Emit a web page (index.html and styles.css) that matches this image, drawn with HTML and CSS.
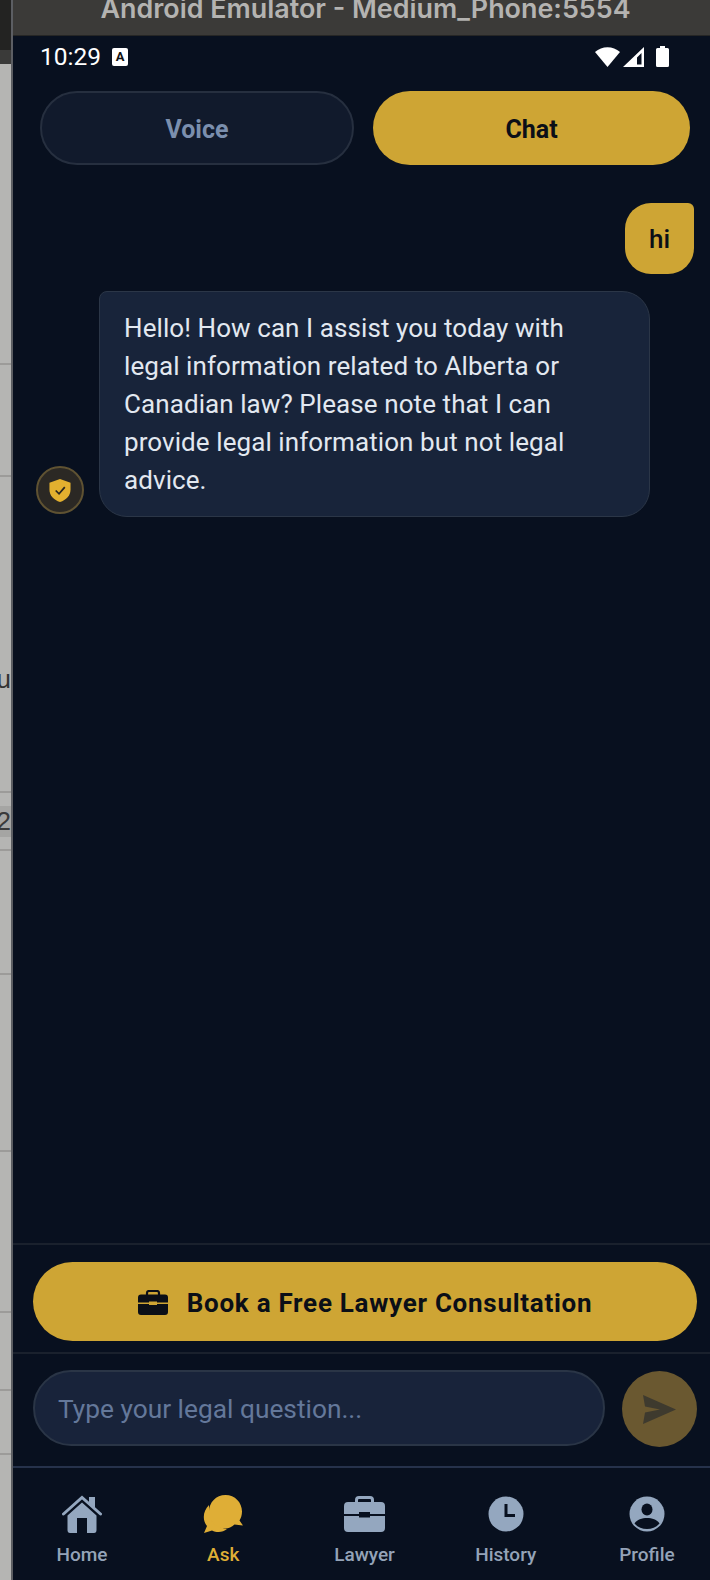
FILE: index.html
```html
<!doctype html>
<html lang="en">
<head>
	<meta charset="utf-8">
	<meta name="viewport" content="width=device-width, initial-scale=1.0">
	<title>Android Emulator - Medium_Phone:5554</title>
	<link rel="stylesheet" href="styles.css">
</head>

<body>
	<div id="desk">
		<div class="desk_top"></div>
		<div class="desk_tab"></div>
		<div class="desk_row row_a"></div>
		<div class="desk_row row_b"></div>
		<div class="desk_row row_c">u</div>
		<div class="desk_row row_d">2</div>
		<div class="desk_row row_e"></div>
		<div class="desk_row row_f"></div>
		<div class="desk_row row_g"></div>
		<div class="desk_row row_h"></div>
		<div class="desk_row row_i"></div>
	</div>

	<div id="window">
		<div id="titlebar">Android Emulator - Medium_Phone:5554</div>

		<div id="phone">
			<div id="status">
				<span class="clock">10:29</span>
				<span class="keyboard_badge">A</span>
				<span class="status_right">
					<svg width="25" height="20" viewBox="0 0 25 20"><path d="M0 5 C7 -1.500 18 -1.500 25 5 L12.500 20 Z" fill="#fff"/></svg>
					<svg width="21" height="20" viewBox="0 0 21 20"><path d="M21 0 V20 H0 Z M18.500 6 L14 10.500 V17.500 H18.500 Z" fill="#fff" fill-rule="evenodd"/></svg>
					<svg class="battery" width="13" height="21" viewBox="0 0 13 21"><path d="M4 0 H9 V2 H11.500 Q13 2 13 3.500 V19.500 Q13 21 11.500 21 H1.500 Q0 21 0 19.500 V3.500 Q0 2 1.500 2 H4 Z" fill="#fff"/></svg>
				</span>
			</div>

			<div id="modes">
				<div class="mode mode_voice">Voice</div>
				<div class="mode mode_chat">Chat</div>
			</div>

			<div id="messages">
				<div class="bubble_user">hi</div>
				<div class="bot_row">
					<div class="avatar">
						<svg width="22" height="23" viewBox="0 0 22 24"><path d="M11 0 L22 4 V11 C22 17.500 17.500 22 11 24 C4.500 22 0 17.500 0 11 V4 Z" fill="#e3b02f"/><path d="M6.500 12 L10 15.500 L16 8.500" fill="none" stroke="#2a2620" stroke-width="1.800"/></svg>
					</div>
					<div class="bubble_bot">Hello! How can I assist you today with legal information related to Alberta or Canadian law? Please note that I can provide legal information but not legal advice.</div>
				</div>
			</div>

			<div id="cta_wrap">
				<div class="cta">
					<svg width="30" height="25" viewBox="0 0 30 25"><path d="M9 5 V3 Q9 1 11 1 H19 Q21 1 21 3 V5" fill="none" stroke="#0b0f17" stroke-width="2.200"/><path d="M3 4.500 H27 Q30 4.500 30 7.500 V12.500 H19 V11.500 H11 V12.500 H0 V7.500 Q0 4.500 3 4.500 Z M0 14 H11 V15 H19 V14 H30 V22 Q30 25 27 25 H3 Q0 25 0 22 Z" fill="#0b0f17"/></svg>
					<span>Book a Free Lawyer Consultation</span>
				</div>
			</div>

			<div id="input_wrap">
				<input class="question" type="text" placeholder="Type your legal question...">
				<div class="send">
					<svg width="33" height="29" viewBox="0 0 33 29"><path d="M0 0 L33 14.500 L0 29 L2 17.500 L17 14.500 L2 11.500 Z" fill="#3e3a2e"/></svg>
				</div>
			</div>

			<div id="tabs">
				<div class="tab">
					<svg width="40" height="38" viewBox="0 0 40 38"><path d="M1.500 19 L20 2.500 L38.500 19" fill="none" stroke="#94a7bf" stroke-width="3" stroke-linecap="round"/><path d="M27 2 H33 V13 L27 8 Z" fill="#94a7bf"/><path d="M20 7.500 L34.500 20.500 V35 Q34.500 38 32 38 H25 V23 H15 V38 H8 Q5.500 38 5.500 35 V20.500 Z" fill="#94a7bf"/></svg>
					<span>Home</span>
				</div>
				<div class="tab tab_active">
					<svg width="40" height="38" viewBox="0 0 40 38"><path d="M6 10 C0 16 -1 25 4 31 L1 38 L9 35.500 C14 38 20 37.500 24 34 C14 33 6 23 6 10 Z" fill="#dfae36"/><path d="M22.500 0 C32 0 39 7.500 39 16.500 C39 20 38 23 36.500 25.500 L40 30.500 L31.500 29.500 C28.500 32 25.500 33.500 22.500 33.500 C13 33.500 6 26 6 16.500 C6 7.500 13 0 22.500 0 Z" fill="#dfae36"/></svg>
					<span>Ask</span>
				</div>
				<div class="tab">
					<svg width="41" height="36" viewBox="0 0 41 36"><path d="M12.500 7 V4 Q12.500 1.500 15 1.500 H26 Q28.500 1.500 28.500 4 V7" fill="none" stroke="#94a7bf" stroke-width="3"/><path d="M4 6 H37 Q41 6 41 10 V18 H26 V16 H15 V18 H0 V10 Q0 6 4 6 Z M0 20 H15 V21.500 H26 V20 H41 V32 Q41 36 37 36 H4 Q0 36 0 32 Z" fill="#94a7bf"/></svg>
					<span>Lawyer</span>
				</div>
				<div class="tab">
					<svg width="36" height="36" viewBox="0 0 36 36"><circle cx="18" cy="18" r="17.500" fill="#94a7bf"/><path d="M18 8 V19.500 H27" fill="none" stroke="#08101f" stroke-width="3"/></svg>
					<span>History</span>
				</div>
				<div class="tab">
					<svg width="36" height="36" viewBox="0 0 36 36"><circle cx="18" cy="18" r="17.500" fill="#94a7bf"/><ellipse cx="18" cy="13.500" rx="5.500" ry="6" fill="#08101f"/><path d="M5.500 27.500 C8 23.500 13 22 18 22 C23 22 28 23.500 30.500 27.500 C27.500 31 23 33 18 33 C13 33 8.500 31 5.500 27.500 Z" fill="#08101f"/></svg>
					<span>Profile</span>
				</div>
			</div>
		</div>
	</div>
</body>
</html>
```

FILE: styles.css
```css
html, body {
	margin: 0;
	height: 100%;
}
body {
	display: flex;
	height: 1580px;
	overflow: hidden;
	background: #08101f;
	font-family: Roboto, "Liberation Sans", sans-serif;
}

/* Desktop showing behind the emulator window */
#desk {
	width: 11px;
	flex: none;
	display: flex;
	flex-direction: column;
	background: #b5b5b3;
	border-right: 2px solid #5c5e63;
	overflow: hidden;
	color: #333;
	font: 26px/1 "Liberation Sans", sans-serif;
}
.desk_top {
	height: 50px;
	background: #232322;
}
.desk_tab {
	height: 14px;
	background: #3a3a39;
}
.desk_row {
	flex: none;
	box-sizing: border-box;
	border-bottom: 2px solid #9c9b99;
	display: flex;
	justify-content: flex-end;
	align-items: center;
}
.row_a { height: 301px; }
.row_b { height: 112px; }
.row_c { height: 316px; padding-top: 90px; }
.row_d { height: 58px; background: linear-gradient(#b5b5b3 24%, #a5a5a3 24%, #a5a5a3 78%, #b5b5b3 78%); color: #3a3a3a; }
.row_e { height: 124px; }
.row_f { height: 177px; }
.row_g { height: 161px; }
.row_h { height: 78px; }
.row_i { height: 64px; }

#window {
	flex: 1;
	min-width: 0;
	display: flex;
	flex-direction: column;
}
#titlebar {
	height: 36px;
	flex: none;
	box-sizing: border-box;
	border-bottom: 1px solid #262625;
	background: #3b3a38;
	color: #b4b3b1;
	font: 600 26.900px/17px Inter, Roboto, sans-serif;
	text-align: center;
	white-space: nowrap;
	overflow: hidden;
	padding-left: 8px;
}
#phone {
	flex: 1;
	min-height: 0;
	display: flex;
	flex-direction: column;
}

/* Status bar */
#status {
	height: 55px;
	flex: none;
	box-sizing: border-box;
	padding: 0 41px 14px 27px;
	display: flex;
	align-items: center;
	color: #fff;
}
.clock {
	font-size: 24.500px;
}
.keyboard_badge {
	width: 16px;
	height: 18px;
	margin-left: 11px;
	background: #fff;
	border-radius: 2px;
	color: #111;
	font-size: 13px;
	font-weight: 700;
	line-height: 17px;
	text-align: center;
}
.status_right {
	margin-left: auto;
	display: flex;
	align-items: center;
	gap: 3px;
}
.battery {
	margin-left: 9px;
}

/* Voice / Chat switch */
#modes {
	flex: none;
	display: flex;
	gap: 19px;
	padding: 0 20px 0 27px;
}
.mode {
	height: 74px;
	box-sizing: border-box;
	padding-top: 2px;
	border-radius: 37px;
	display: flex;
	align-items: center;
	justify-content: center;
	font-size: 25px;
	font-weight: 700;
}
.mode_voice {
	width: 314px;
	background: #111a2c;
	border: 2px solid #262f3f;
	color: #7b8fae;
}
.mode_chat {
	width: 317px;
	background: #cea534;
	color: #0b0f17;
}

/* Conversation */
#messages {
	flex: 1;
	min-height: 0;
	display: flex;
	flex-direction: column;
	padding: 38px 16px 0 23px;
}
.bubble_user {
	align-self: flex-end;
	width: 69px;
	height: 71px;
	border-radius: 26px 6px 26px 26px;
	background: #cea534;
	color: #0b0f17;
	font-size: 26px;
	font-weight: 500;
	line-height: 73px;
	text-align: center;
}
.bot_row {
	margin-top: 17px;
	display: flex;
	align-items: flex-end;
	gap: 15px;
}
.avatar {
	width: 48px;
	height: 48px;
	flex: none;
	box-sizing: border-box;
	margin-bottom: 3px;
	border: 2px solid #5f5232;
	border-radius: 50%;
	background: #2b2824;
	display: flex;
	align-items: center;
	justify-content: center;
}
.bubble_bot {
	width: 551px;
	box-sizing: border-box;
	padding: 17px 24px;
	border: 1px solid #2b3647;
	border-radius: 8px 28px 28px 28px;
	background: #18243a;
	color: #e2e8f0;
	font-size: 26px;
	letter-spacing: 0.08px;
	line-height: 38px;
}

/* Book a lawyer */
#cta_wrap {
	flex: none;
	padding: 17px 13px 11px 20px;
	border-top: 2px solid #1a212d;
	border-bottom: 2px solid #1a212d;
}
.cta {
	height: 79px;
	box-sizing: border-box;
	padding-top: 2px;
	border-radius: 40px;
	background: #cea534;
	color: #0b0f17;
	display: flex;
	align-items: center;
	justify-content: center;
	gap: 19px;
	font-size: 26px;
	font-weight: 700;
	letter-spacing: 0.72px;
}

/* Question box */
#input_wrap {
	flex: none;
	display: flex;
	gap: 17px;
	padding: 16px 13px 19px 20px;
}
.question {
	width: 572px;
	height: 76px;
	box-sizing: border-box;
	padding: 2px 23px 0;
	border: 2px solid #2a3546;
	border-radius: 38px;
	background: #18233a;
	color: #e2e8f0;
	font: 26.300px Roboto, sans-serif;
	outline: none;
}
.question::placeholder {
	color: #64789a;
	opacity: 1;
}
.send {
	width: 75px;
	height: 76px;
	margin-top: 1px;
	border-radius: 50%;
	background: #6a5830;
	display: flex;
	align-items: center;
	justify-content: center;
}

/* Bottom tabs */
#tabs {
	flex: none;
	height: 114px;
	box-sizing: border-box;
	border-top: 2px solid #26324b;
	padding: 27px 13px 0 19px;
	display: flex;
	justify-content: space-between;
}
.tab {
	width: 100px;
	height: 72px;
	display: flex;
	flex-direction: column;
	align-items: center;
	color: #94a3b8;
	font-size: 19px;
	font-weight: 500;
}
.tab svg {
	height: 38px;
}
.tab span {
	margin-top: 11px;
	line-height: 22px;
}
.tab_active {
	color: #dfae36;
}
```
